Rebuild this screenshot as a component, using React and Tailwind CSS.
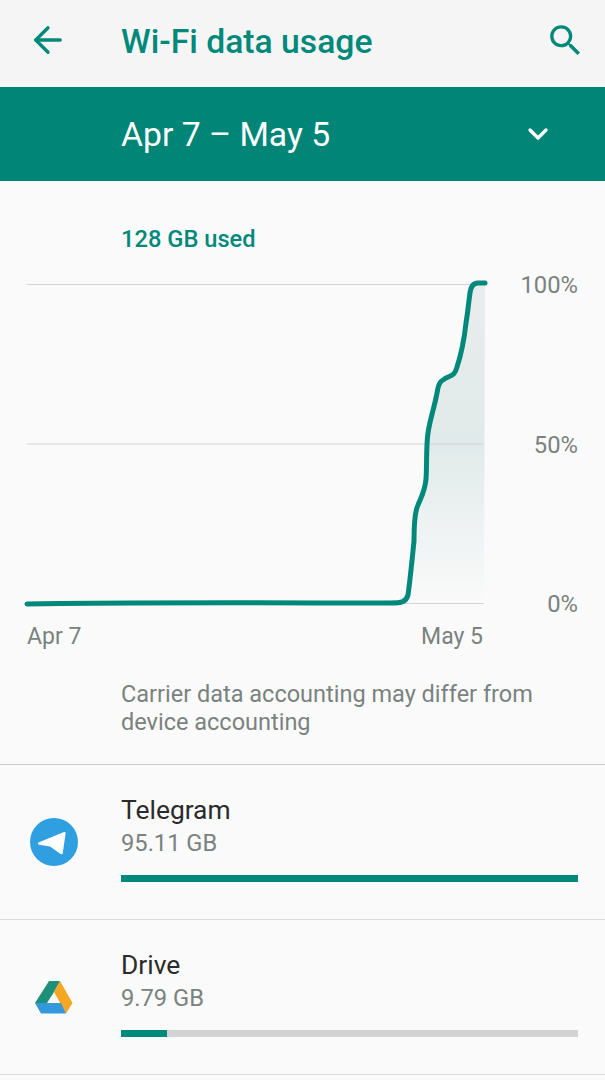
import { ArrowLeft, ChevronDown } from 'lucide-react'

const curve =
  'M27 603 C120 601 300 602 390 602 C402 602 406 601 408 594 C410 580 412 560 414 540 C414 520 416 508 418 504 C422 494 425 490 426 478 C427 465 426 445 428 432 C430 418 434 408 437 392 C439 380 441 380 446 377 C452 374 455 374 457 366 C461 354 464 340 466 322 C468 310 469 298 470 292 C471 284 474 282 478 282 L485 282'

function UsageChart() {
  return (
    <svg width="457" height="328" viewBox="27 279 457 328" className="block overflow-visible">
      <defs>
        <linearGradient id="usageFill" x1="0" y1="0" x2="0" y2="1">
          <stop offset="0" stopColor="#e9ecec" />
          <stop offset="0.5" stopColor="#e1eaea" />
          <stop offset="1" stopColor="#fafafa" />
        </linearGradient>
      </defs>
      <path d={curve + ' L484 603 L400 603 Z'} fill="url(#usageFill)" />
      <path d="M27 283.5H484M27 443H484M27 602.5H484" stroke="#d2d6d6" strokeWidth="1" fill="none" />
      <path d={curve} stroke="#00897b" strokeWidth="5" fill="none" strokeLinecap="round" strokeLinejoin="round" />
    </svg>
  )
}

function SearchIcon() {
  return (
    <svg width="41" height="41" viewBox="0 0 24 24" fill="#00897b">
      <path d="M15.5 14h-.79l-.28-.27A6.471 6.471 0 0 0 16 9.5 6.5 6.5 0 1 0 9.5 16c1.61 0 3.09-.59 4.23-1.57l.27.28v.79l5 4.99L20.49 19l-4.99-5zm-6 0C7.01 14 5 11.99 5 9.5S7.01 5 9.5 5 14 7.01 14 9.5 11.99 14 9.5 14z" />
    </svg>
  )
}

function TelegramIcon() {
  return (
    <svg width="48" height="48" viewBox="0 0 48 48">
      <circle cx="24" cy="24" r="24" fill="#2f9fe2" />
      <path d="M8.5 24.5 L34 14 C35.2 13.6 35.8 14.3 35.6 15.4 L32.8 35 C32.6 36.4 31.6 36.6 30.6 36 L20 28.5 L9 26.8 C7.8 26.4 7.6 25 8.5 24.5 Z" fill="#fff" />
    </svg>
  )
}

function DriveIcon() {
  return (
    <svg width="38" height="33" viewBox="35 980 38 33">
      <path d="M49 980 H60 L54 991 L47 1002 H35 Z" fill="#1f9078" />
      <path d="M60 980 L72.5 1002 L66 1012.5 L54 991 Z" fill="#f5a623" />
      <path d="M35 1002 H61 L66 1012.5 H41 Z" fill="#3398dc" />
    </svg>
  )
}

function AppRow({ icon, name, size, percent }) {
  return (
    <div className="flex h-[155px] border-b border-[#dcdcdc]">
      <div className="w-[108px] flex items-center justify-center">{icon}</div>
      <div className="flex-1 pl-[13px] pr-[27px] pt-[27px]">
        <div className="text-[26.4px] leading-[36px] text-[#2b2b2b]">{name}</div>
        <div className="text-[23.7px] leading-[30px] text-[#7a8280]">{size}</div>
        <div className="mt-[17px] h-[7px] bg-[#d3d3d3]">
          <div className="h-full bg-[#00897b]" style={{ width: `${percent}%` }} />
        </div>
      </div>
    </div>
  )
}

export default function App() {
  return (
    <div className="h-[1080px] overflow-hidden bg-[#fafafa] font-['Roboto',sans-serif]">
      <div className="flex items-center justify-between h-[87px] bg-[#f5f5f5] pl-[27px] pr-[19px] pb-[6px]">
        <div className="flex items-center">
          <ArrowLeft className="w-[42px] h-[42px] text-[#00897b]" strokeWidth={1.9} />
          <h1 className="ml-[52px] mt-[3px] text-[33.7px] font-medium text-[#00897b]">Wi-Fi data usage</h1>
        </div>
        <SearchIcon />
      </div>

      <div className="flex items-center justify-between h-[94px] bg-[#008577] pl-[121px] pr-[51px]">
        <span className="pt-[2px] text-[33.7px] text-white">Apr 7 – May 5</span>
        <ChevronDown className="w-[32px] h-[32px] text-white" strokeWidth={2.5} />
      </div>

      <div className="border-b border-[#c9cccc] h-[584px]">
        <div className="pl-[121px] pt-[44px] text-[23.7px] leading-[28px] font-medium text-[#00897b]">128 GB used</div>
        <div className="flex mt-[27px] pl-[27px] pr-[27px]">
          <UsageChart />
          <div className="flex-1 flex flex-col justify-between items-end text-[23.8px] leading-[30px] h-[349px] text-[#7a8280] -mt-[10px]">
            <span>100%</span>
            <span>50%</span>
            <span>0%</span>
          </div>
        </div>
        <div className="flex justify-between w-[456px] ml-[27px] mt-[3px] text-[23px] leading-[30px] text-[#7a8280]">
          <span>Apr 7</span>
          <span>May 5</span>
        </div>
        <p className="pl-[121px] pr-[27px] mt-[28px] text-[23.5px] leading-[28px] text-[#7a8280]">
          Carrier data accounting may differ from device accounting
        </p>
      </div>

      <AppRow icon={<TelegramIcon />} name="Telegram" size="95.11 GB" percent={100} />
      <AppRow icon={<DriveIcon />} name="Drive" size="9.79 GB" percent={10} />
    </div>
  )
}
